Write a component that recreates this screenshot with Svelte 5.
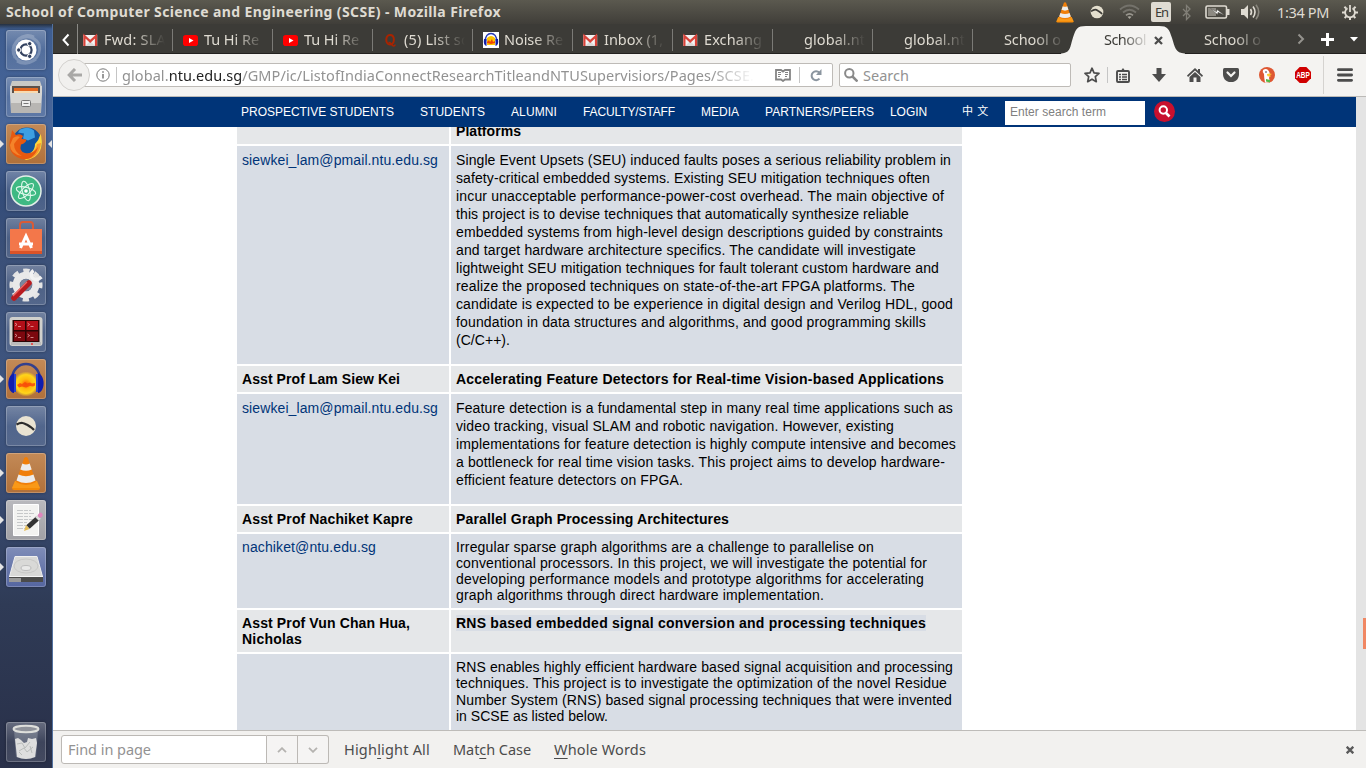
<script>
  // Spreads the letters of a label so that it takes up the given width.
  function fit(node, width) {
    const range = document.createRange();
    range.selectNodeContents(node);
    const natural = range.getBoundingClientRect().width;
    const count = node.textContent.length;
    node.style.letterSpacing = `${(width - natural) / count}px`;
  }

  const tabs = [
    { icon: 'gmail', text: 'Fwd: SLA', w: 62 },
    { icon: 'youtube', text: 'Tu Hi Re', w: 55 },
    { icon: 'youtube', text: 'Tu Hi Re', w: 55 },
    { icon: 'quora', text: '(5) List so', w: 66 },
    { icon: 'audacity', text: 'Noise Re', w: 59 },
    { icon: 'gmail', text: 'Inbox (1,', w: 59 },
    { icon: 'gmail', text: 'Exchang', w: 58 },
    { icon: '', text: 'global.nt', w: 61 },
    { icon: '', text: 'global.nt', w: 61 },
    { icon: '', text: 'School o', w: 57 },
    { icon: '', text: 'School', w: 42, active: true },
    { icon: '', text: 'School o', w: 57 }
  ];

  const apps = [
    { name: 'dash' },
    { name: 'files' },
    { name: 'firefox', tint: 'orange', run: true, focus: true },
    { name: 'atom' },
    { name: 'software' },
    { name: 'settings' },
    { name: 'terminator' },
    { name: 'audacity', tint: 'orange', run: true },
    { name: 'ball' },
    { name: 'vlc', tint: 'orange', run: true },
    { name: 'gedit', tint: 'grey', run: true },
    { name: 'disk', tint: 'blue', run: true },
    { name: 'trash' }
  ];

  const menu = [
    { text: 'PROSPECTIVE STUDENTS', w: 153 },
    { text: 'STUDENTS', w: 65 },
    { text: 'ALUMNI', w: 46 },
    { text: 'FACULTY/STAFF', w: 92 },
    { text: 'MEDIA', w: 38 },
    { text: 'PARTNERS/PEERS', w: 109 },
    { text: 'LOGIN', w: 37 }
  ];

  const rows = [
    {
      mail: 'siewkei_lam@pmail.ntu.edu.sg', h: 218, lh: 18,
      lines: [
        ['Single Event Upsets (SEU) induced faults poses a serious reliability problem in', 495],
        ['safety-critical embedded systems. Existing SEU mitigation techniques often', 474],
        ['incur unacceptable performance-power-cost overhead. The main objective of', 488],
        ['this project is to devise techniques that automatically synthesize reliable', 453],
        ['embedded systems from high-level design descriptions guided by constraints', 487],
        ['and target hardware architecture specifics. The candidate will investigate', 460],
        ['lightweight SEU mitigation techniques for fault tolerant custom hardware and', 483],
        ['realize the proposed techniques on state-of-the-art FPGA platforms. The', 459],
        ['candidate is expected to be experience in digital design and Verilog HDL, good', 497],
        ['foundation in data structures and algorithms, and good programming skills', 470],
        ['(C/C++).', 54]
      ]
    },
    { prof: [['Asst Prof Lam Siew Kei', 158]], title: 'Accelerating Feature Detectors for Real-time Vision-based Applications', w: 488, h: 26 },
    {
      mail: 'siewkei_lam@pmail.ntu.edu.sg', h: 110, lh: 18,
      lines: [
        ['Feature detection is a fundamental step in many real time applications such as', 497],
        ['video tracking, visual SLAM and robotic navigation. However, existing', 438],
        ['implementations for feature detection is highly compute intensive and becomes', 500],
        ['a bottleneck for real time vision tasks. This project aims to develop hardware-', 489],
        ['efficient feature detectors on FPGA.', 227]
      ]
    },
    { prof: [['Asst Prof Nachiket Kapre', 171]], title: 'Parallel Graph Processing Architectures', w: 273, h: 26 },
    {
      mail: 'nachiket@ntu.edu.sg', mw: 134, h: 74, lh: 16,
      lines: [
        ['Irregular sparse graph algorithms are a challenge to parallelise on', 418],
        ['conventional processors. In this project, we will investigate the potential for', 471],
        ['developing performance models and prototype algorithms for accelerating', 468],
        ['graph algorithms through direct hardware implementation.', 368]
      ]
    },
    { prof: [['Asst Prof Vun Chan Hua,', 168], ['Nicholas', 60]], title: 'RNS based embedded signal conversion and processing techniques', w: 470, h: 42, mark: true },
    {
      mail: '', h: 90, lh: 16.4,
      lines: [
        ['RNS enables highly efficient hardware based signal acquisition and processing', 497],
        ['techniques. This project is to investigate the optimization of the novel Residue', 491],
        ['Number System (RNS) based signal processing techniques that were invented', 496],
        ['in SCSE as listed below.', 152]
      ]
    }
  ];
</script>

{#snippet favicon(name)}
  {#if name === 'gmail'}
    <svg width="16" height="16" viewBox="0.8 0 16 16"><path fill="#f2f2f2" d="M1 3h14v11H1z" /><path fill="#d9d9d9" d="m3 14 5-5 5 5z" /><path fill="none" stroke="#d8433a" stroke-width="2.2" d="M2.2 14V4L8 9.4 13.8 4v10" /></svg>
  {:else if name === 'youtube'}
    <svg width="16" height="16" viewBox="0 0 16 16"><rect y="3" width="15" height="11" rx="2.8" fill="#f00" /><path fill="#fff" d="m6 6 4.5 2.5L6 11z" /></svg>
  {:else if name === 'quora'}
    <svg width="16" height="16" viewBox="0 0 16 16"><path fill="none" stroke="#a82400" stroke-width="2" d="M7 3C4.2 3 3.300 5.400 3.300 7.700S4.500 12.500 7 12.500s3.900-2.300 3.900-4.800S9.700 3 7 3Z" /><path fill="none" stroke="#a82400" stroke-width="1.500" d="M5.500 10.500c3-.8 3 3.500 5 3.500 1.300 0 1.600-.8 1.600-1.500" /></svg>
  {:else if name === 'audacity'}
    <svg width="16" height="16" viewBox="0 0 16 16"><path fill="#fff" d="M0 0h16v16H0z" /><path fill="#ffc400" d="M4 6q4-4 8 0v7H4z" /><path fill="#f04500" d="m4 10 2-2 1 2 2-3 1 3 2-1v2l-4 1-4-1z" /><path fill="none" stroke="#283bb5" stroke-width="1.500" d="M2.500 9C1.500-1 14.500-1 13.500 9" /><path fill="#1420a8" d="M1 7h2.500v7Q0 13 1 7m14 0h-2.500v7Q16 13 15 7" /></svg>
  {/if}
{/snippet}

{#snippet cone()}
  <path fill="#f58a07" d="m6 35 3-7h22l3 7q0 2-2 2H8q-2 0-2-2" /><path fill="#ffab2e" d="m9 28-3 7h28l-3-7z" opacity=".45" />
  <path fill="#f07f0a" d="M18.200 5q1.800-2 3.600 0L30 29q-10 6-20 0z" /><path fill="#ececec" d="m16.300 10.500-2 6q5.700 2.600 11.400 0l-2-6q-3.700 1.800-7.400 0M12.500 21.500l-2 6q9.500 5 19 0l-2-6q-7.500 3.500-15 0" />
{/snippet}

{#snippet appIcon(name)}
  <svg width="40" height="40" viewBox="0 0 40 40">
    {#if name === 'dash'}
      <g fill="none" stroke="#fff" stroke-opacity=".22" stroke-width="3"><path d="M7 20C9 6 25 2 33 14M9 28C4 10 18 2 28 7M33 14C37 28 22 38 11 31M30 29C18 38 7 29 7 20" /></g>
      <circle cx="20" cy="20" r="10.500" fill="#fff" /><circle cx="20" cy="20" r="5.600" fill="none" stroke="#33415f" stroke-width="2.200" />
      <g fill="#33415f" stroke="#fff" stroke-width="1"><circle cx="12.700" cy="20" r="2.200" /><circle cx="23.700" cy="13.700" r="2.200" /><circle cx="23.700" cy="26.300" r="2.200" /></g>
    {:else if name === 'files'}
      <path fill="#c9c9c5" d="M6 4h28l2 6H4z" /><path fill="#5b514c" d="M6 9h28v8H6z" /><path fill="#e56a22" d="M8 11h24v5H8z" /><path fill="#f7dab0" d="M8 14h24v2H8z" /><path fill="#d6d5d2" d="M4 9h2v7h28V9h2v8l-1 19H5L4 17z" /><path fill="#a3a29f" d="M5 26h30v10H5z" opacity=".6" /><rect x="15.500" y="23.500" width="9" height="6" rx="1" fill="#eee" stroke="#777" /><path stroke="#777" d="M17.500 26.500h5" />
    {:else if name === 'firefox'}
      <circle cx="21" cy="18.500" r="15" fill="#12549f" /><path fill="#3d9fe2" d="M14 5.500q9-4 14 1l1 7-7 3-5-2 1-5-6-1z" /><path fill="#ffd53a" d="M34.500 10c4 11 0 24-14.500 26l-8-5c11 1 17-3 17-11q4-4 5.500-10" /><path fill="#f9982d" d="M35 19c-1 10-7 16-15 16l-6-4c10 1 16-4 17-11z" /><path fill="#e8590f" d="M5 12 6 6l4 5q4-2 7 1l-1.500 3 5 .5q-.5 3.500-5.500 5-2 7 4 8.500c7 1 10-2 13-6-2 9-9 13.500-16 12C4 32 1.500 22 5 12" /><path fill="#f4832a" d="M7 14q4-3 7-1l-3 3-3 4q0 8 8 12-12-2-12-11z" />
    {:else if name === 'atom'}
      <circle cx="20" cy="20" r="15" fill="#3eb983" stroke="#e3efe8" stroke-width="1.500" /><g fill="none" stroke="#dff8eb" stroke-width="1.100"><ellipse cx="20" cy="20" rx="10" ry="3.700" transform="rotate(15 20 20)" /><ellipse cx="20" cy="20" rx="10" ry="3.700" transform="rotate(75 20 20)" /><ellipse cx="20" cy="20" rx="10" ry="3.700" transform="rotate(135 20 20)" /></g><circle cx="20" cy="20" r="1.800" fill="#fff" />
    {:else if name === 'software'}
      <path fill="none" stroke="#d85b36" stroke-width="2" d="M14 14V7q0-3 3-3h7q3 0 3 3v7" /><path fill="#f3774a" d="M4 11h32v25H4z" /><path fill="#dc5327" d="M4 33h32v3H4z" /><path fill="none" stroke="#fff" stroke-width="3" d="m14.500 30 5.500-12 5.500 12M13 26h14" />
    {:else if name === 'settings'}
      <circle cx="20" cy="20" r="14.300" fill="none" stroke="#e4e4e4" stroke-width="4.500" stroke-dasharray="6.200 5.030" stroke-dashoffset="3.100" /><circle cx="20" cy="20" r="9.800" fill="none" stroke="#e9e9e9" stroke-width="7" /><circle cx="20" cy="20" r="6" fill="#7c869c" /><path stroke="#e0e0e0" stroke-width="4" d="m20 21 9-9" /><path fill="none" stroke="#f2f2f2" stroke-width="3.500" d="M27.500 5.500q-4 3-1 7.500 4 3.500 9-1" /><path stroke="#b91c20" stroke-width="5.500" stroke-linecap="round" d="M8 33 23 18" /><path stroke="#ef6a66" stroke-width="1.300" d="M7 31 21 17" />
    {:else if name === 'terminator'}
      <rect x="3.500" y="5" width="33" height="29" rx="3" fill="#d0d0cc" /><path fill="#bbb" d="M5 30h30v3H5z" /><rect x="6.500" y="8" width="27" height="22" fill="#2b0404" /><path fill="#b10f18" d="M8 9h11v9H8zm12.500 0H32v9H20.500z" /><path fill="#7d080e" d="M8 19.500h11V29H8zm12.500 0H32V29H20.500z" /><path fill="none" stroke="#f4b7b9" stroke-width=".7" d="m9 11 2 1.500L9 14m3 .5h3m6.500-3.500 2 1.500-2 1.500m3 .5h3M9 22l2 1.500L9 25m3 .5h3m6.500-3.500 2 1.500-2 1.500m3 .5h3" /><circle cx="26" cy="32" r="1" fill="#e33" />
    {:else if name === 'audacity'}
      <defs><radialGradient id="glow"><stop offset="0" stop-color="#ff5a00" /><stop offset=".4" stop-color="#ffb90c" /><stop offset=".75" stop-color="#ffd51b" /><stop offset="1" stop-color="#ffd51b" stop-opacity="0" /></radialGradient></defs>
      <ellipse cx="20" cy="25" rx="13" ry="12.500" fill="url(#glow)" /><path fill="#f7490a" fill-opacity=".85" d="m11 26 3-2 2 1 3-2 2 1.500 3-1 2 1 3-.5v2.500l-2 1-3-.5-4 1.500-4-1-3 1z" /><path fill="none" stroke="#33408d" stroke-width="2.500" d="M6 20C7 0 33 0 34 20" /><path fill="#101dae" d="M8 14v20c-7-1-8-17 0-20m24 0v20c7-1 8-17 0-20" /><path fill="#2845cf" d="M8 15h2v18H8zm22 0h2v18h-2z" />
    {:else if name === 'ball'}
      <circle cx="20" cy="20" r="10" fill="#e9e3d2" /><path fill="none" stroke="#2c2c2c" stroke-width="2.200" d="M10.500 18.500c6-3 8-1 11 .5q5 3 6.500 5" />
    {:else if name === 'vlc'}
      {@render cone()}
    {:else if name === 'gedit'}
      <path fill="#f3f3f1" stroke="#fff" d="M7.500 4.500h25v31h-25z" /><path stroke="#c6c8c9" stroke-dasharray="6 1 4 1" d="M11 10.500h14M11 13.500h17M11 16.500h14M11 19.500h16M11 22.500h10M11 25.500h13M11 28.500h8" /><path stroke="#333" stroke-width="5" d="m22 27 10-9" /><path stroke="#ddd" stroke-width="5" d="m31 19 2-2" /><path stroke="#df86bd" stroke-width="4.500" stroke-linecap="round" d="m34 15.500.5-.5" /><path fill="#e5bc55" d="m18 31 2-6 3.500 4z" />
    {:else if name === 'disk'}
      <path fill="#d9d9d7" stroke="#efefef" d="m9 9.500 22 0 5.500 20h-33z" /><path fill="#f6f6f6" d="M3 29h34v2H3z" /><path fill="#4b4b4a" d="M3 30h34v5H3z" /><path fill="#999" d="M3 31h12v4H3z" /><ellipse cx="20" cy="19" rx="12" ry="7" fill="none" stroke="#c8c8c6" /><ellipse cx="20" cy="21" rx="5" ry="2.500" fill="#e9e9e8" stroke="#bcbcbc" />
    {:else if name === 'trash'}
      <path fill="#c7ccd5" fill-opacity=".3" d="m8 8 2 27q10 4 20 0l2-27z" /><path fill="#dedede" d="m9 17 3-1 3 2 3 3 3-1 1-4 4 1 4-1 1 5-2 14q-9 4-18 0z" /><path fill="none" stroke="#b9bcba" d="m11 22 5-1 3 5 5-6M13 29l5-3 3 4 6-5m-11 8-3-3m11-6 2 7" /><ellipse cx="20" cy="7" rx="12.500" ry="3.200" fill="#8f929a" stroke="#dedfdb" stroke-width="2" />
    {/if}
  </svg>
{/snippet}

<div class="desktop">
  <header class="panel">
    <span class="title"><span use:fit={495}>School of Computer Science and Engineering (SCSE) - Mozilla Firefox</span></span>
    <div class="tray">
      <svg width="20" height="22" viewBox="4 2 32 36">{@render cone()}</svg>
      <svg width="14" height="14" viewBox="9 9 22 22"><circle cx="20" cy="20" r="10" fill="#e4dfce" /><path fill="none" stroke="#3c3b37" stroke-width="2.500" d="M10.500 19c6-4 8-3 11-1q5 3 6.500 5" /></svg>
      <svg width="21" height="16" viewBox="0 0 21 16" fill="none" stroke-width="1.700"><path stroke="#74726b" d="M1 5.500q9.500-8 19 0M4 8.500q6.500-5.500 13 0" /><path stroke="#9a978f" d="M7 11.300q3.500-3 7 0" /><path fill="#aaa79e" d="m10.500 15-2-2.200q2-1.300 4 0z" /></svg>
      <span class="lang"><span use:fit={13}>En</span></span>
      <svg width="10" height="17" viewBox="0 0 10 17"><path fill="none" stroke="#817f77" stroke-width="1.300" d="m1 5 7 7-3.500 3.500v-14L8 5l-7 7" /></svg>
      <svg width="25" height="14" viewBox="0 0 25 14"><rect x="1" y="1" width="20.500" height="12" rx="1.500" fill="none" stroke="#dfdbd2" stroke-width="1.600" /><path fill="#dfdbd2" d="M22 4h2.500v6H22z" /><path fill="#8d8a82" d="M3 3h8v8H3z" /><path fill="#fff" stroke="#55534c" stroke-width=".5" d="m5.500 3.500 6 3.200.5-2.200 7 5.500-6-2.700-.5 2.200z" /></svg>
      <svg width="20" height="16" viewBox="0 0 20 16"><path fill="#dfdbd2" d="M0 5h3l4-4v14l-4-4H0z" /><g fill="none" stroke-width="1.600"><path stroke="#dfdbd2" d="M9.500 5q2 3 0 6m2.500-8.500q4 5.500 0 11" /><path stroke="#89867d" d="M15 .7q5.500 7.300 0 14.600" /></g></svg>
      <span class="clock"><span use:fit={52}>1:34 PM</span></span>
      <svg width="16" height="16" viewBox="0 0 16 16"><g fill="none" stroke="#dfdbd2"><path stroke-width="1.800" d="M5.500 4.200a4.900 4.900 0 1 0 5 0M8 1v7" /><path stroke-width="2" d="m2.400 2.800 1.800 1.700m9.400-1.700-1.800 1.700M0 8.500h3m10 0h3M2.600 14l1.800-1.700m9 1.700-1.800-1.700M8 13v3" /></g></svg>
    </div>
  </header>

  <nav class="launcher">
    {#each apps as app}
      <div class={['tile', app.tint, app.name === 'trash' && 'last']}>
        {@render appIcon(app.name)}
        {#if app.run}<i class="run"></i>{/if}
        {#if app.focus}<i class="focus"></i>{/if}
      </div>
    {/each}
  </nav>

  <main class="window">
    <div class="tabs">
      <div class="scroll"><svg width="10" height="14" viewBox="0 0 10 14"><path fill="none" stroke="#fff" stroke-width="2" d="M7.500 1.500 2.500 7l5 5.500" /></svg></div>
      {#each tabs as tab, i}
        <div class={['tab', tab.active && 'active', i >= 9 && 'plain']}>
          {#if tab.active}
            <svg class="shape" width="124" height="29" viewBox="0 0 124 29"><path fill="#f4f3f1" d="M0 28.500c10-.5 9-7 12-16S16 1 25 1h73c9 0 10 3 13 12s3 15 13 15.500v.5H0z" /></svg>
          {/if}
          <span class="fav">{@render favicon(tab.icon)}</span>
          <span class="label"><span use:fit={tab.w}>{tab.text}</span></span>
          {#if tab.active}
            <svg class="close" width="9" height="9" viewBox="0 0 9 9"><path stroke="#4c4c4c" stroke-width="2.300" d="m1 1 7 7m0-7L1 8" /></svg>
          {/if}
        </div>
      {/each}
      <div class="tabtools">
        <svg width="8" height="12" viewBox="0 0 8 12"><path fill="none" stroke="#95938e" stroke-width="2" d="m1.500 1.500 4.500 4.500-4.500 4.500" /></svg>
        <svg width="13" height="13" viewBox="0 0 13 13"><path stroke="#fff" stroke-width="3" d="M6.500 0v13M0 6.500h13" /></svg>
        <svg width="8" height="5" viewBox="0 0 8 5"><path fill="#fff" d="M0 0h8L4 4.500z" /></svg>
      </div>
    </div>

    <div class="toolbar">
      <div class="back"><svg width="15" height="14" viewBox="0 0 15 14"><path fill="none" stroke="#a9a8a6" stroke-width="3" d="M8 1 2.200 7 8 13M3 7h12" /></svg></div>
      <div class="url">
        <svg width="14" height="14" viewBox="0 0 14 14"><circle cx="7" cy="7" r="6.200" fill="none" stroke="#777" /><path stroke="#777" stroke-width="1.500" d="M7 6v4.500M7 3.300v1.500" /></svg>
        <i class="bar"></i>
        <span class="address"><span use:fit={632}>global.<b>ntu.edu.sg</b>/GMP/ic/ListofIndiaConnectResearchTitleandNTUSupervisiors/Pages/SCSE.</span></span>
        <svg class="reader" width="16" height="13" viewBox="0 0 16 13"><path fill="none" stroke="#858585" stroke-width="1.800" d="M1 1h5l2 1.500L10 1h5v9.500h-5L8 12l-2-1.500H1z" /><path stroke="#858585" d="M3 3.500h3M3 5.500h3M3 7.500h2m5-4h3m-3 2h3m-3 2h2" /></svg>
        <i class="bar"></i>
        <svg width="12" height="13" viewBox="0 0 12 13"><path fill="none" stroke="#8b959f" stroke-width="2" d="M9.500 9.700A4.500 4.500 0 1 1 9.300 3.500" /><path fill="#8b959f" d="M11.500 0v6H6z" /></svg>
      </div>
      <div class="search">
        <svg width="14" height="14" viewBox="0 0 14 14"><circle cx="5.300" cy="5.300" r="4.200" fill="none" stroke="#8a8a8a" stroke-width="2" /><path stroke="#8a8a8a" stroke-width="2.500" d="m8.500 8.500 5 5" /></svg>
        <span><span use:fit={46}>Search</span></span>
      </div>
      <div class="tools">
        <svg width="16" height="16" viewBox="0 0 16 16"><path fill="none" stroke="#4c4c4c" stroke-width="1.700" stroke-linejoin="round" d="m8 1.200 2 4.600 5 .5-3.700 3.400 1 5L8 12.200l-4.300 2.500 1-5L1 6.300l5-.5z" /></svg>
        <i class="bar"></i>
        <svg width="14" height="15" viewBox="0 0 14 15"><rect x="1" y="3" width="12" height="11" rx="1" fill="none" stroke="#4c4c4c" stroke-width="1.900" /><path fill="#4c4c4c" d="M4 2h1.500L7 0l1.500 2H10v2H4z" /><path stroke="#4c4c4c" stroke-width="1.400" d="M3 6.500h2m1 0h5m-8 2.500h2m1 0h5m-8 2.500h2m1 0h5" /></svg>
        <svg width="14" height="14" viewBox="0 0 14 14"><path fill="#4c4c4c" d="M4.500 0h5v6H14l-7 8-7-8h4.500z" /></svg>
        <svg width="16" height="14" viewBox="0 0 16 14"><path fill="#4c4c4c" d="M8 0 0 7.500 1 9l7-6.500L15 9l1-1.500-3-2.800V1h-2v1.800zM8 4 2.500 9v5h4V9.500h3V14h4V9z" /></svg>
        <svg width="16" height="14" viewBox="0 0 16 14"><path fill="#4c4c4c" d="M1.500 0h13Q16 0 16 1.500V6c0 11-16 11-16 0V1.500Q0 0 1.500 0" /><path fill="none" stroke="#f4f3f1" stroke-width="2.200" stroke-linecap="round" d="M4.500 4.500 8 8l3.500-3.500" /></svg>
        <svg width="16" height="16" viewBox="0 0 16 16"><circle cx="8" cy="8" r="8" fill="#de5833" /><path fill="#fff" d="M4 3q3-2 5 0 3 3 1 8l1 4q-3 1-5 .5Q5 10 5 7 3 5 4 3" /><path fill="#fc3" d="M8 7q3-1 5 0l-2 1 1 1.500Q8 10 8 8z" /><path fill="#55b846" d="m7 12 4 1v2.500l-4-1z" /><circle cx="7" cy="5" r=".8" fill="#334" /></svg>
        <svg class="abp" width="16" height="16" viewBox="0 0 16 16"><path fill="#d00000" d="M4.700 0h6.600L16 4.700v6.600L11.300 16H4.700L0 11.300V4.700z" /><text x="1.200" y="11.200" textLength="13.600" lengthAdjust="spacingAndGlyphs" font-family="Liberation Sans" font-size="9" font-weight="bold" fill="#fff">ABP</text></svg>
        <i class="rule"></i>
        <svg width="16" height="14" viewBox="0 0 16 14"><path stroke="#4c4c4c" stroke-width="2.800" stroke-linecap="round" d="M1.400 1.700h13.200M1.400 7h13.200M1.400 12.300h13.200" /></svg>
      </div>
    </div>

    <div class="page">
      <div class="site">
        <div class="bluebar">
          <div class="menu">
            {#each menu as item}<a href="#top"><span use:fit={item.w}>{item.text}</span></a>{/each}
          </div>
          <span class="zh"><span use:fit={27}>中 文</span></span>
          <div class="term"><span use:fit={96}>Enter search term</span></div>
          <svg width="21" height="21" viewBox="0 0 21 21"><circle cx="10.500" cy="10.500" r="10.500" fill="#c8102e" /><circle cx="9.300" cy="9" r="3.700" fill="none" stroke="#fff" stroke-width="2" /><path stroke="#fff" stroke-width="2.600" d="m12 12 3.500 3.500" /></svg>
        </div>
        <div class="table">
          <div class="cell head" style:height="17px"></div>
          <div class="cell head cut" style:height="17px"><span use:fit={65}>Platforms</span></div>
          {#each rows as row}
            {#if row.title}
              <div class="cell head" style:height="{row.h}px">
                {#each row.prof as [text, w]}<p><span use:fit={w}>{text}</span></p>{/each}
              </div>
              <div class="cell head" style:height="{row.h}px"><p><span class={{ mark: row.mark }} use:fit={row.w}>{row.title}</span></p></div>
            {:else}
              <div class="cell" style:height="{row.h}px" style:line-height="{row.lh}px"><a href="#top">{#if row.mail}<span use:fit={row.mw ?? 196}>{row.mail}</span>{/if}</a></div>
              <div class="cell" style:height="{row.h}px" style:line-height="{row.lh}px">
                {#each row.lines as [text, w]}<p><span use:fit={w}>{text}</span></p>{/each}
              </div>
            {/if}
          {/each}
        </div>
      </div>
      <div class="scrollbar"><i></i></div>
    </div>

    <div class="find">
      <div class="input"><span use:fit={83}>Find in page</span></div>
      <div class="btn"><svg width="10" height="6" viewBox="0 0 10 6"><path fill="none" stroke="#b5b3b0" stroke-width="1.800" d="m1 5.200 4-4 4 4" /></svg></div>
      <div class="btn end"><svg width="10" height="6" viewBox="0 0 10 6"><path fill="none" stroke="#b5b3b0" stroke-width="1.800" d="m1 .8 4 4 4-4" /></svg></div>
      <span class="opt"><span use:fit={86}>High<u>l</u>ight All</span></span>
      <span class="opt"><span use:fit={78}>Mat<u>c</u>h Case</span></span>
      <span class="opt"><span use:fit={92}><u>W</u>hole Words</span></span>
      <svg class="x" width="8" height="8" viewBox="0 0 8 8"><path stroke="#5a5a5a" stroke-width="2.300" d="m.7.7 6.600 6.600m0-6.600L.7 7.300" /></svg>
    </div>
  </main>
</div>

<style>
  :global(body) { overflow: hidden; }
  .desktop { display: grid; grid-template: 24px 744px / 53px 1313px; width: 1366px; height: 768px; overflow: hidden; font: 14.500px/18px "Noto Sans", "Open Sans", sans-serif; white-space: nowrap; }
  svg { display: block; flex: none; }
  p { margin: 0; }
  a { color: inherit; text-decoration: none; }

  .panel { grid-column: 1 / 3; display: flex; align-items: center; justify-content: space-between; padding: 0 8px 0 6px; background: linear-gradient(#5b594f, #403e39); color: #dfdbd2; }
  .title { font-weight: 700; font-size: 14px; }
  .tray { display: flex; align-items: center; }
  .tray svg:nth-of-type(1) { margin-right: 15px; }
  .tray svg:nth-of-type(2) { margin-right: 15px; }
  .lang { box-sizing: border-box; width: 20px; height: 20px; margin: 0 11px; padding-left: 4px; border-radius: 2px; background: #dfdbd2; color: #3c3b37; font-size: 13px; line-height: 20px; }
  .tray svg:nth-of-type(4) { margin-right: 13px; }
  .tray svg:nth-of-type(5) { margin-right: 11px; }
  .clock { width: 52px; margin: 0 13px 0 16px; }

  .launcher { display: flex; flex-direction: column; gap: 7px; box-sizing: border-box; padding: 6px 0 6px 6px; border-right: 1px solid #52719f; background: linear-gradient(#25303f, #3e5d90 5px, #48669a 100px, #344d7a 170px, #3b5078 230px, #3f5681 400px, #35466a 500px, #2f3b56 580px, #293049 744px); }
  .tile { position: relative; width: 40px; height: 40px; border-radius: 3px; background: linear-gradient(#ffffff48, #ffffff18 50%, #ffffff20); box-shadow: inset 0 0 0 1px #ffffff38, 0 0 3px #0005; }
  .orange { background: linear-gradient(#c38a57, #b0703a); }
  .grey { background: linear-gradient(#b9b9bd, #a0a0a5); }
  .blue { background: linear-gradient(#7f8db8, #5566a0); }
  .last { margin-top: auto; }
  .run, .focus { position: absolute; top: 16px; border: 4px solid transparent; }
  .run { left: -6px; border-left-color: #e4e4e4; border-right: 0; }
  .focus { right: -6px; border-right-color: #e4e4e4; border-left: 0; }

  .window { display: grid; grid-template: 30px 43px 633px 38px / 1313px; min-width: 0; }
  .tabs { display: flex; background: #3c3b37; color: #dfdbd2; box-shadow: inset 0 -1px #22211f; }
  .scroll { display: flex; align-items: center; box-sizing: border-box; width: 25px; padding: 2px 0 0 8px; border-right: 1px solid #8b8a86; }
  .tab { position: relative; display: flex; align-items: center; width: 100px; flex: none; box-sizing: border-box; padding: 2px 0 0 5px; }
  .tab:not(.plain)::after { content: ""; position: absolute; right: 5px; top: 5px; height: 22px; border-right: 1px solid #7b7a76; }
  .fav { width: 16px; margin-right: 5px; }
  .label { position: relative; width: 68px; flex: none; margin-bottom: 2px; line-height: 22px; mask-image: linear-gradient(90deg, #000 30px, transparent 61px); }
  .active { color: #3c3b37; }
  .active .label { width: 44px; mask-image: linear-gradient(90deg, #000 18px, transparent 46px); }
  .shape { position: absolute; left: -17px; top: 1px; }
  .close { position: relative; margin-left: 6px; }
  .tabtools { display: flex; align-items: center; gap: 16px; margin-left: 19px; }

  .toolbar { display: flex; align-items: center; box-sizing: border-box; padding-left: 5px; border-bottom: 1px solid #bcbab7; background: #f4f3f1; }
  .back { z-index: 1; display: grid; place-items: center; box-sizing: border-box; flex: none; width: 32px; height: 32px; border: 1px solid #d3d1ce; border-radius: 50%; background: #f1f0ee; }
  .url, .search { display: flex; flex: none; align-items: center; box-sizing: border-box; height: 24px; border: 1px solid #bebbb7; border-radius: 2px; background: #fff; color: #929292; }
  .url { width: 754px; margin-left: -11px; padding-left: 16px; }
  .bar { width: 1px; height: 16px; background: #c5c5c5; }
  .url .bar { margin-left: 6px; }
  .address { width: 632px; margin-left: 5px; line-height: 22px; mask-image: linear-gradient(90deg, #000 93%, transparent); }
  .address b { font-weight: 400; color: #222; }
  .reader { margin-left: 21px; }
  .url .reader + .bar { margin: 0 10px 0 8px; }
  .search { width: 232px; margin-left: 6px; padding-left: 4px; gap: 5px; }
  .tools { display: flex; flex: none; align-items: center; align-self: stretch; padding-left: 13px; }
  .tools svg { margin-right: 20px; }
  .tools svg:nth-of-type(1) { margin-right: 7px; }
  .tools .bar { margin-right: 8px; }
  .tools svg:nth-of-type(2) { margin-right: 22px; }
  .tools svg:nth-of-type(3) { margin-right: 21px; }
  .tools svg:nth-of-type(7) { margin-right: 12px; }
  .tools svg:last-child { margin-right: 0; }
  .abp { overflow: visible; }
  .rule { width: 1px; height: 38px; margin-right: 13px; background: #d5d3d0; }

  .page { display: flex; overflow: hidden; background: #fff; font: 14px/16px "Liberation Sans", sans-serif; }
  .site { width: 1303px; }
  .bluebar { position: relative; z-index: 1; display: flex; align-items: flex-start; height: 30px; box-sizing: border-box; padding-left: 188px; background: #003478; color: #fff; font-size: 12px; line-height: 30px; }
  .menu { display: flex; gap: 26px; width: 721px; }
  .menu a:last-child { margin-left: -10px; }
  .zh { width: 43px; font: 11px/27px "Noto Sans CJK SC", sans-serif; }
  .term { box-sizing: border-box; width: 140px; height: 24px; margin: 4px 9px 0 0; padding-left: 5px; background: #fff; color: #808080; line-height: 23px; }
  .bluebar > svg { margin-top: 4px; }
  .table { display: grid; grid-template-columns: 212px 511px; gap: 2px; margin-left: 184px; color: #000; }
  .cell { box-sizing: border-box; padding: 5px; background: #d8dde5; }
  .cell a { color: #003478; }
  .head { background: #e5e7e9; font-weight: 700; }
  .cut { padding-top: 0; line-height: 8px; }
  .mark { background: #d8dde5; }
  .scrollbar { width: 10px; background: #e4e4e4; }
  .scrollbar i { display: block; width: 3px; height: 31px; margin: 521px 0 0 7px; background: #f08763; }

  .find { display: flex; align-items: center; box-sizing: border-box; padding-left: 8px; border-top: 1px solid #bebcb9; background: #f2f1ef; color: #4c4c4c; }
  .input, .btn { box-sizing: border-box; height: 29px; border: 1px solid #bcb9b5; }
  .input { width: 206px; padding-left: 6px; border-radius: 3px 0 0 3px; background: #fff; color: #929292; line-height: 27px; }
  .btn { display: grid; place-items: center; width: 31px; border-left: 0; background: #f5f4f3; }
  .end { border-radius: 0 3px 3px 0; margin-right: -8px; }
  .opt { margin: 0 0 2px 23px; }
  u { text-underline-offset: 3px; }
  .x { margin: 0 12px 0 auto; }
</style>
